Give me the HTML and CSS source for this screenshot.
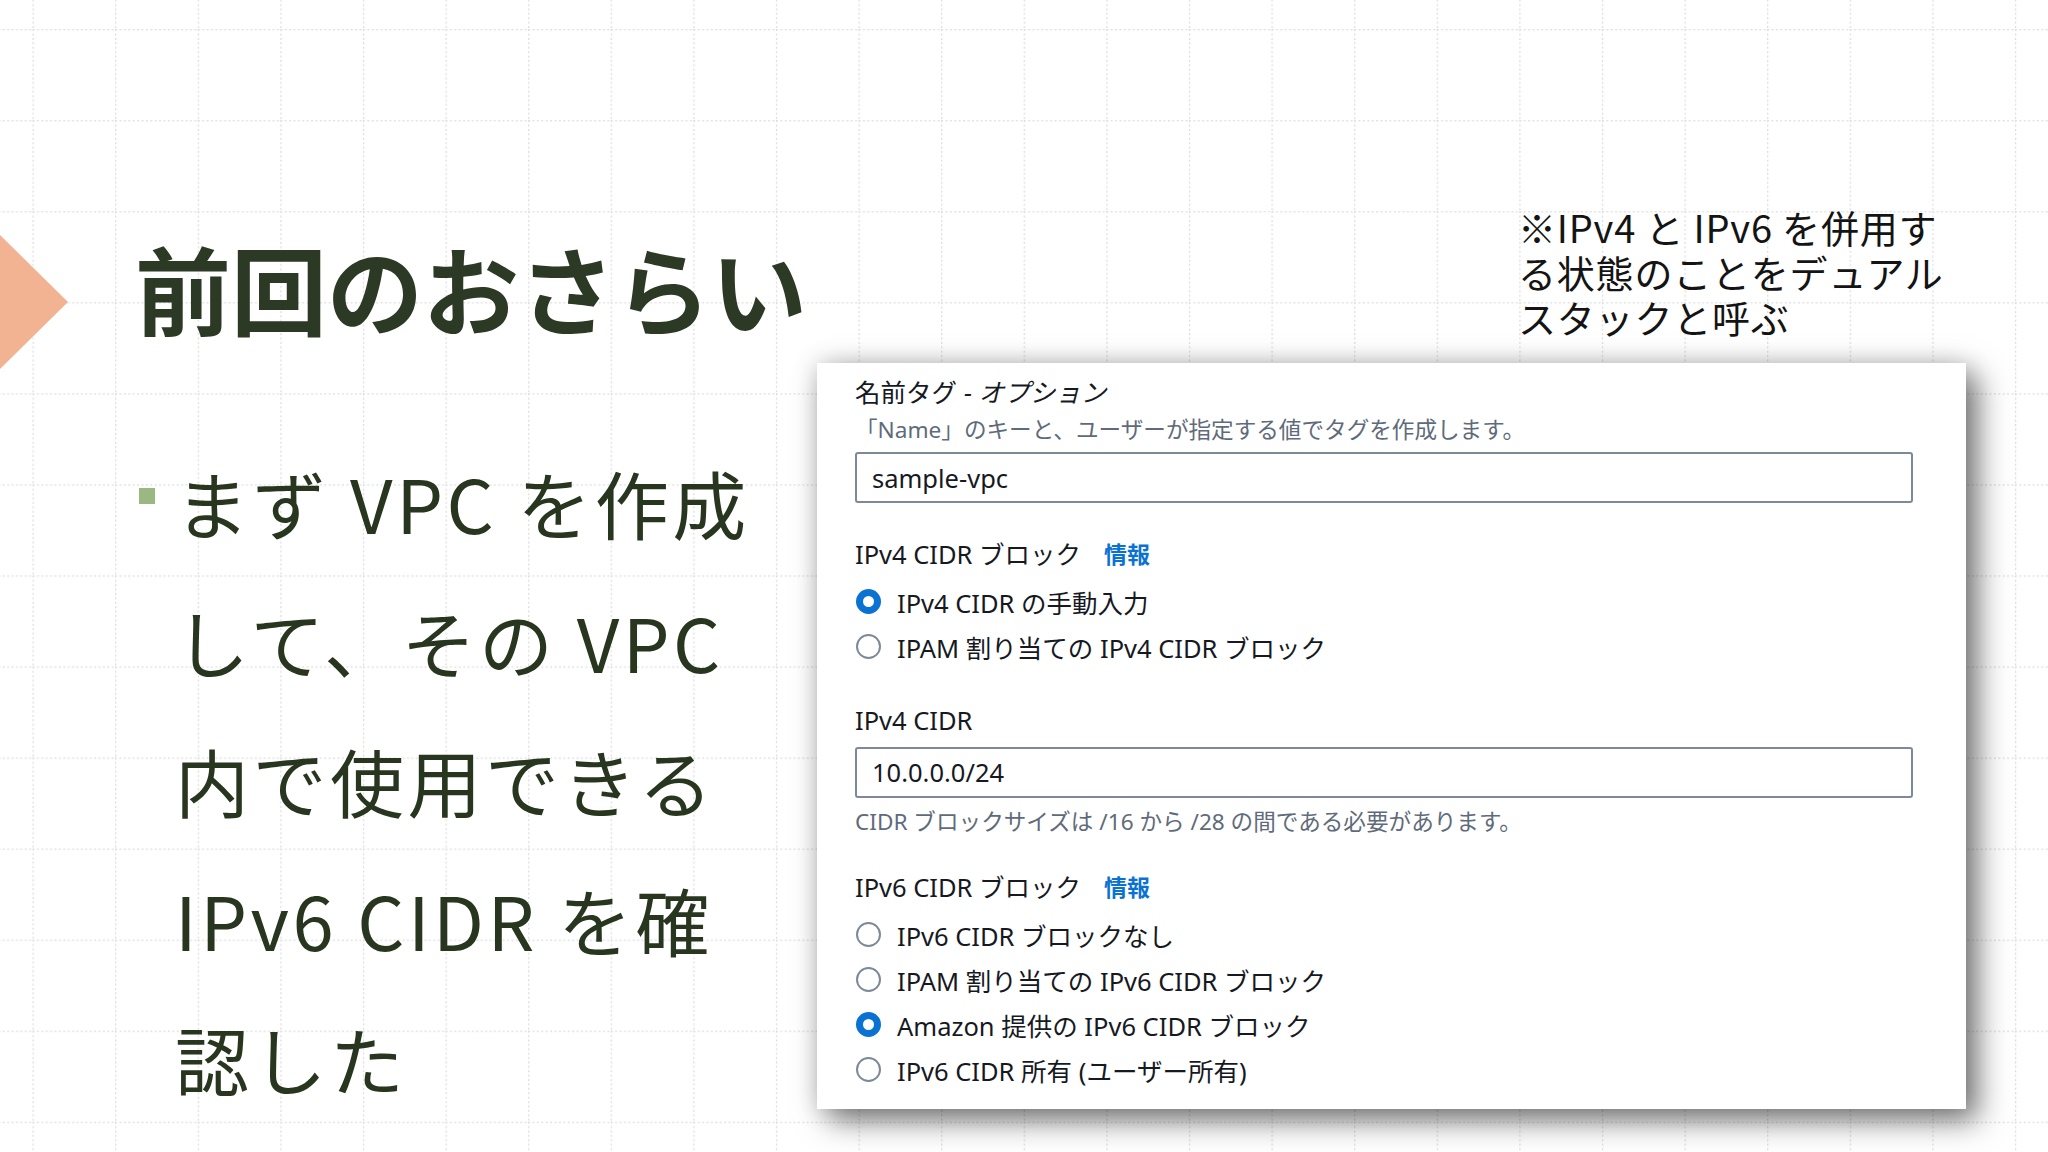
FILE: index.html
```html
<!DOCTYPE html>
<html lang="ja">
<head>
<meta charset="utf-8">
<title>前回のおさらい</title>
<link rel="stylesheet" href="styles.css">
</head>
<body>
<div class="slide">
  <svg class="bg" width="2048" height="1152" viewBox="0 0 2048 1152" xmlns="http://www.w3.org/2000/svg">
    <defs>
      <pattern id="grid" x="32.5" y="29.1" width="82.6" height="91.05" patternUnits="userSpaceOnUse">
        <path d="M0.6 0V91.05M0 0.6H82.6" stroke="#dcdcdc" stroke-width="1.3" stroke-dasharray="2 2.4" fill="none"/>
      </pattern>
    </defs>
    <rect width="2048" height="1152" fill="url(#grid)"/>
  </svg>
  <div class="content">
    <div class="head">
      <div class="tri"></div>
      <h1 class="title">前回のおさらい</h1>
    </div>
    <div class="note">
      <div class="nl">※IPv4 と IPv6 を併用す</div>
      <div class="nl">る状態のことをデュアル</div>
      <div class="nl">スタックと呼ぶ</div>
    </div>
    <div class="points">
      <span class="sq"></span>
      <p class="point">まず VPC を作成<br>して、その VPC<br>内で使用できる<br>IPv6 CIDR を確<br>認した</p>
    </div>
    <div class="card">
      <div class="lbl">名前タグ <i>- オプション</i></div>
      <div class="desc">「Name」のキーと、ユーザーが指定する値でタグを作成します。</div>
      <div class="input first">sample-vpc</div>
      <div class="lbl grp g1">IPv4 CIDR ブロック<span class="info">情報</span></div>
      <div class="radios r1">
        <div class="radio"><span class="dot on"></span>IPv4 CIDR の手動入力</div>
        <div class="radio"><span class="dot"></span>IPAM 割り当ての IPv4 CIDR ブロック</div>
      </div>
      <div class="lbl l2">IPv4 CIDR</div>
      <div class="input second">10.0.0.0/24</div>
      <div class="desc hint">CIDR ブロックサイズは /16 から /28 の間である必要があります。</div>
      <div class="lbl grp g2">IPv6 CIDR ブロック<span class="info">情報</span></div>
      <div class="radios r2">
        <div class="radio"><span class="dot"></span>IPv6 CIDR ブロックなし</div>
        <div class="radio"><span class="dot"></span>IPAM 割り当ての IPv6 CIDR ブロック</div>
        <div class="radio"><span class="dot on"></span>Amazon 提供の IPv6 CIDR ブロック</div>
        <div class="radio"><span class="dot"></span>IPv6 CIDR 所有 (ユーザー所有)</div>
      </div>
    </div>
  </div>
</div>
</body>
</html>
```

FILE: styles.css
```css
html, body {
  margin: 0;
  padding: 0;
  background: #ffffff;
}

.slide {
  width: 2048px;
  height: 1152px;
  display: grid;
  overflow: hidden;
  background: #ffffff;
}

.bg,
.content {
  grid-area: 1 / 1;
}

.bg {
  display: block;
}

.content {
  display: grid;
  grid-template-columns: 817px 1149px 1fr;
  grid-template-rows: 363px 746px 1fr;
  font-family: "Noto Sans CJK JP", "Noto Sans", sans-serif;
}

/* header */
.head {
  grid-column: 1;
  grid-row: 1;
  display: flex;
  align-items: flex-start;
  padding-top: 235px;
}

.tri {
  flex: none;
  width: 68px;
  height: 134px;
  background: #f2b393;
  clip-path: polygon(0 0, 100% 50%, 0 100%);
}

.title {
  margin: 4px 0 0 67px;
  font-size: 96px;
  line-height: 96px;
  font-weight: 700;
  color: #2c3924;
  white-space: nowrap;
}

/* note */
.note {
  grid-column: 2 / 4;
  grid-row: 1;
  padding: 208px 0 0 701px;
  display: flex;
  flex-direction: column;
  gap: 7px;
  font-size: 38px;
  letter-spacing: 0.8px;
  color: #141414;
  white-space: nowrap;
}

.nl {
  height: 38px;
  line-height: 38px;
}

/* bullet */
.points {
  grid-column: 1;
  grid-row: 2 / 4;
  display: flex;
  align-items: flex-start;
  padding: 69px 0 0 139px;
}

.sq {
  flex: none;
  width: 16px;
  height: 16px;
  margin-top: 56px;
  background: #9bb883;
}

.point {
  margin: 0 0 0 20px;
  font-size: 74px;
  line-height: 139px;
  letter-spacing: 3.5px;
  font-weight: 400;
  color: #28351f;
  white-space: nowrap;
}

/* console card */
.card {
  grid-column: 2;
  grid-row: 2;
  background: #ffffff;
  box-shadow: 12px 12px 28px rgba(0, 0, 0, 0.5), 0 0 24px rgba(0, 0, 0, 0.18);
  padding: 12px 0 0 38px;
  display: flex;
  flex-direction: column;
  align-items: flex-start;
  font-family: "Noto Sans", "Noto Sans CJK JP", sans-serif;
  color: #16191f;
  white-space: nowrap;
}

.lbl {
  font-size: 25.5px;
  line-height: 34px;
  display: flex;
  align-items: center;
}

.lbl i {
  font-style: italic;
  margin-left: 7px;
}

.desc {
  font-size: 22.6px;
  line-height: 30px;
  color: #5f6b7a;
  margin-top: 6px;
}

.input {
  box-sizing: border-box;
  width: 1058px;
  height: 51px;
  border: 2px solid #7d8998;
  border-radius: 3px;
  padding-left: 15px;
  display: flex;
  align-items: center;
  font-size: 25.5px;
  color: #16191f;
}

.input.first {
  margin-top: 7px;
}

.g1 {
  margin-top: 34px;
}

.info {
  color: #0972d3;
  font-weight: 700;
  font-size: 23px;
  margin-left: 23px;
}

.radios {
  display: flex;
  flex-direction: column;
}

.r1 {
  margin-top: 8px;
}

.radio {
  height: 44.8px;
  display: flex;
  align-items: center;
  font-size: 25.5px;
}

.dot {
  flex: none;
  box-sizing: border-box;
  width: 25px;
  height: 25px;
  border-radius: 50%;
  border: 2px solid #7d8998;
  margin: 0 16px 0 1px;
}

.dot.on {
  border: 7.5px solid #0972d3;
}

.l2 {
  margin-top: 34px;
}

.input.second {
  margin-top: 10px;
}

.hint {
  margin-top: 9px;
}

.g2 {
  margin-top: 33px;
}

.r2 {
  margin-top: 9px;
}
```
